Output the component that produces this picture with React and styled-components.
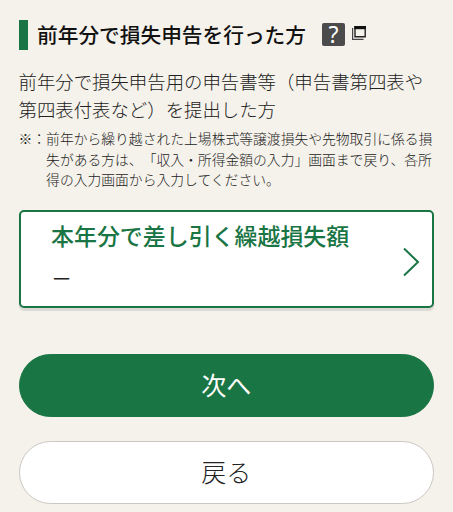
import styled, { createGlobalStyle } from 'styled-components';

const GlobalStyle = createGlobalStyle`
  * {
    box-sizing: border-box;
  }

  body {
    margin: 0;
    background: #f5f2eb;
    color: #222;
    font-family: 'Noto Sans CJK JP', sans-serif;
    text-spacing-trim: space-all;
  }
`;

const Page = styled.main`
  width: 453px;
  height: 512px;
  padding: 20px 19px 0 18.5px;
  overflow: hidden;
`;

const Heading = styled.div`
  display: flex;
  align-items: center;
  height: 30px;
  padding-left: 9px;
  border-left: 9px solid #197543;
`;

const HeadingText = styled.h2`
  margin: 0 0 2px 0.5px;
  font-size: 20.7px;
  font-weight: 500;
  line-height: 30px;
  color: #111;
  white-space: nowrap;
`;

const HelpBadge = styled.span`
  display: flex;
  align-items: center;
  justify-content: center;
  width: 23px;
  height: 23px;
  margin: 0 0 2px 16px;
  border-radius: 2px;
  background: #4b4b4b;
  color: #fff;
  font-family: 'Noto Sans', sans-serif;
  font-size: 23px;
  font-weight: 400;
  line-height: 23px;
`;

const WindowIcon = styled.svg`
  width: 14px;
  height: 14px;
  margin: 0 0 4px 7px;
`;

const Lead = styled.p`
  margin: 18px 0 0;
  font-size: 18.4px;
  font-weight: 300;
  line-height: 27.5px;
  white-space: nowrap;
`;

const Note = styled.div`
  display: flex;
  margin-top: 5px;
  font-size: 13.8px;
  font-weight: 300;
  line-height: 20.6px;
  color: #222;
  white-space: nowrap;

  p {
    margin: 0;
  }
`;

const Mark = styled.span`
  flex: 0 0 27.5px;
`;

const Card = styled.section`
  display: flex;
  align-items: center;
  justify-content: space-between;
  height: 98px;
  margin-top: 20px;
  padding: 0 12px 0 30.5px;
  border: 2px solid #197543;
  border-radius: 5px;
  background: #fff;
  box-shadow: 0 3px 1px #dbd9d3;
`;

const CardBody = styled.div`
  align-self: flex-start;
  padding-top: 5px;
`;

const CardTitle = styled.h3`
  margin: 0;
  font-size: 22.95px;
  font-weight: 500;
  line-height: 36px;
  color: #197543;
`;

const Amount = styled.div`
  margin-top: 10px;
  font-size: 21px;
  font-weight: 400;
  line-height: 28px;
`;

const Chevron = styled.svg`
  width: 17px;
  height: 30px;
  margin-top: 7px;
`;

const Buttons = styled.div`
  display: flex;
  flex-direction: column;
  gap: 24px;
  margin-top: 46px;
`;

const Button = styled.button`
  height: 63px;
  padding: 0 0 3px;
  border: 1px solid ${({ $primary }) => ($primary ? '#197543' : '#cbc7c2')};
  border-radius: 32px;
  background: ${({ $primary }) => ($primary ? '#197543' : '#fff')};
  color: ${({ $primary }) => ($primary ? '#fff' : '#222')};
  font-family: inherit;
  font-size: 25px;
  font-weight: ${({ $primary }) => ($primary ? 400 : 300)};
  line-height: 36px;
`;

export default function App() {
  return (
    <>
      <GlobalStyle />
      <Page>
        <Heading>
          <HeadingText>前年分で損失申告を行った方</HeadingText>
          <HelpBadge>?</HelpBadge>
          <WindowIcon viewBox="0 0 14 14" fill="none">
            <path d="M3 1h10.2v9.8H3z" stroke="#222" strokeWidth="1.4" />
            <path d="M2.3 0h11.7v3.2H2.3z" fill="#111" />
            <path d="M0.6 2v11.4H11.5" stroke="#444" strokeWidth="1.2" />
          </WindowIcon>
        </Heading>
        <Lead>
          前年分で損失申告用の申告書等（申告書第四表や
          <br />
          第四表付表など）を提出した方
        </Lead>
        <Note>
          <Mark>※：</Mark>
          <p>
            前年から繰り越された上場株式等譲渡損失や先物取引に係る損
            <br />
            失がある方は、「収入・所得金額の入力」画面まで戻り、各所
            <br />
            得の入力画面から入力してください。
          </p>
        </Note>
        <Card>
          <CardBody>
            <CardTitle>本年分で差し引く繰越損失額</CardTitle>
            <Amount>－</Amount>
          </CardBody>
          <Chevron viewBox="0 0 17 30" fill="none">
            <path d="M1 1.5L15 15L1 28.5" stroke="#197543" strokeWidth="2" />
          </Chevron>
        </Card>
        <Buttons>
          <Button $primary>次へ</Button>
          <Button>戻る</Button>
        </Buttons>
      </Page>
    </>
  );
}
